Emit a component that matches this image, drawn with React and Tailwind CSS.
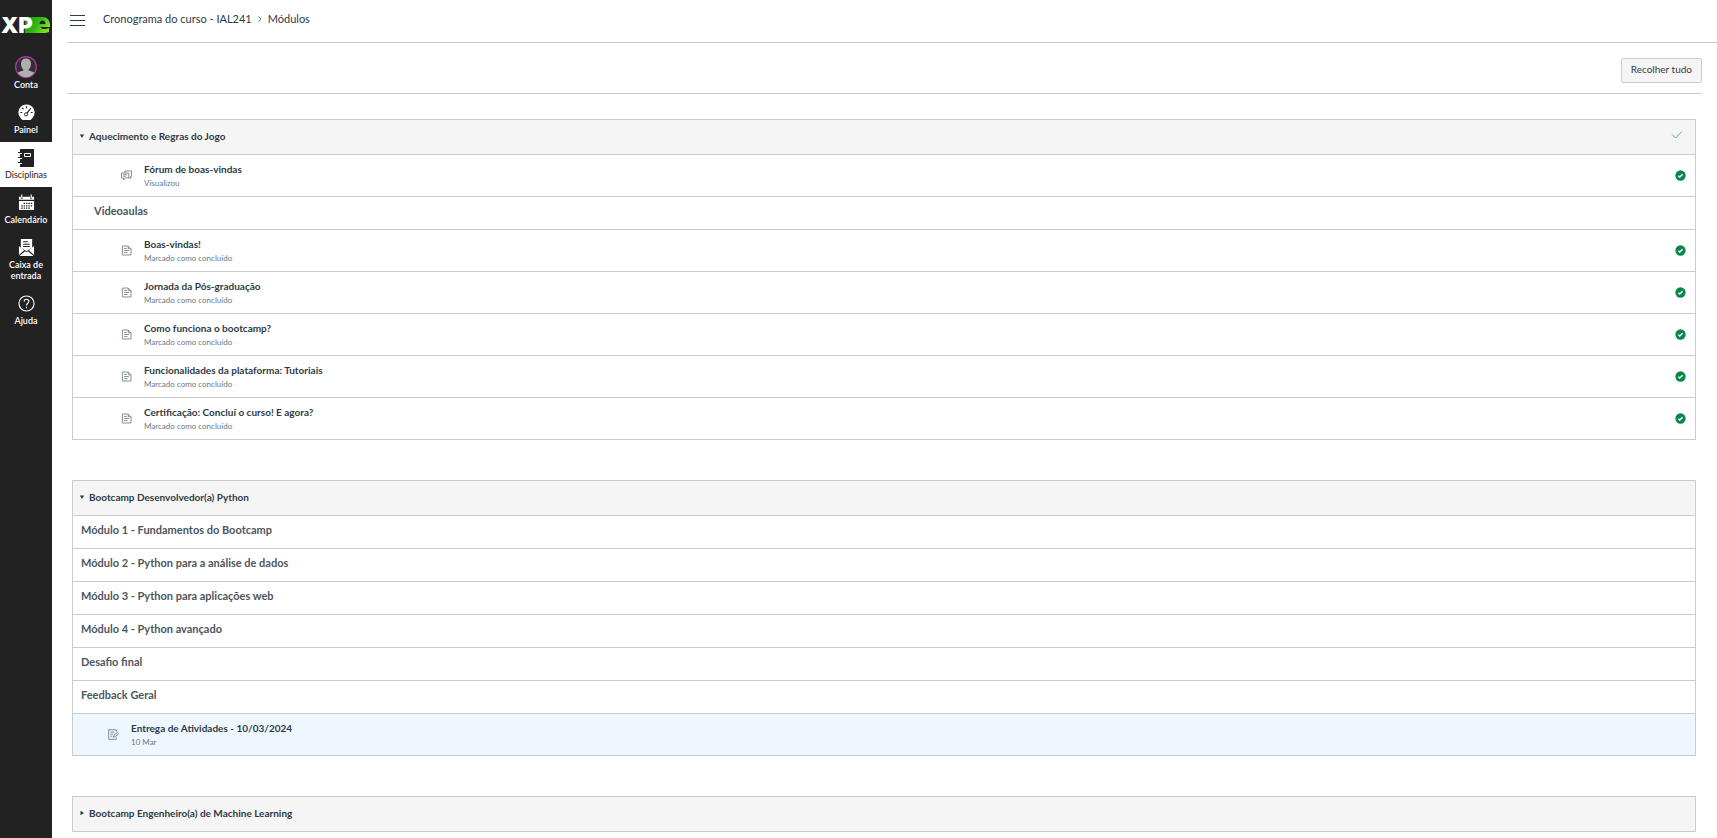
import { useState } from 'react';

const iconProps = {
    viewBox: '0 0 16 16',
    fill: 'none',
    stroke: 'currentColor',
    'aria-hidden': true,
};

const PageIcon = () => (
    <svg {...iconProps} className="size-[11px] shrink-0 text-[#6b7780]" strokeWidth="1.2">
        <path d="M2 1.500h8.500l4 4v9H2zM10.500 1.500v4h4M4.500 5h4M4.500 8h7M4.500 11h5" />
    </svg>
);

const DiscussionIcon = () => (
    <svg {...iconProps} className="size-[11px] shrink-0 text-[#6b7780]" strokeWidth="1.2">
        <path d="M5.500 4.500v-3h9.800v8H14v3l-2.500-2M.7 4.500h10.600v7H6.500L3.500 14.500v-3H.7zM3 7h6M3 9.200h4" />
    </svg>
);

const AssignmentIcon = () => (
    <svg {...iconProps} className="size-[11px] shrink-0 text-[#6b7780]" strokeWidth="1.2">
        <path d="M12 4V1H1v14h11v-2.500M3.500 4.500h6M3.500 7.500h4M3.500 10.500h3M8 12l.8-3 4.700-4 2 2-4.700 4z" />
    </svg>
);

const CompleteIcon = () => (
    <svg viewBox="0 0 16 16" className="size-[11px]" role="img" aria-label="Concluído">
        <circle cx="8" cy="8" r="7.5" fill="#0b874b" />
        <path d="M5 8.300l2 2 4-4" fill="none" stroke="#fff" strokeWidth="2" />
    </svg>
);

const Logo = () => (
    <svg viewBox="0 0 52 49" className="w-full h-[49px]" role="img" aria-label="XPe">
        <defs>
            <linearGradient id="logo-green" x1="0" x2="1" y1="0" y2=".4">
                <stop offset="0" stopColor="#009e12" />
                <stop offset=".6" stopColor="#35b818" />
                <stop offset="1" stopColor="#7ee01f" />
            </linearGradient>
        </defs>
        <path
            d="M25 17h17c5 0 8 3.500 8 8v2h-9.500c.5 1.500 2 2 4 2 1.800 0 3-.3 4.500-1v4c-2 .8-4 1-6 1H25z"
            fill="url(#logo-green)"
        />
        <path d="M39.500 24c.4-2.500 1.600-3.500 3.200-3.500s2.600 1 2.800 3.500z" fill="#222" />
        <text x="1" y="33" fill="#fff" fontFamily="Inter, sans-serif" fontWeight="900" fontSize="22">XP</text>
    </svg>
);

const AvatarIcon = () => (
    <svg viewBox="0 0 22 22" className="size-[22px]" aria-hidden="true">
        <circle cx="11" cy="11" r="10.4" fill="#303030" stroke="#bf32a4" strokeWidth="1.2" />
        <path d="M11 2.500c3.200 0 5 2 5 5.200 0 2.600-1 4.600-2.300 5.600v1.200c2 .6 4.500 1 5.500 2.300a9.800 9.800 0 0 1-16.400 0c1-1.300 3.500-1.700 5.500-2.300v-1.200C7 12.300 6 10.300 6 7.700c0-3.200 1.800-5.200 5-5.200z" fill="#b0b0b0" />
    </svg>
);

const DashboardIcon = () => (
    <svg viewBox="0 0 18 18" className="size-[17px]" aria-hidden="true">
        <path d="M9 .5a8.500 8.500 0 0 0-7.200 13c.8 1.500 2.200 3 3.200 3.500h8c1-.5 2.400-2 3.200-3.500A8.500 8.500 0 0 0 9 .5z" fill="#fff" />
        <path d="M9 2.500v2M4.500 4l1.300 1.500M2.500 9h2M13.500 9h2M9 10.500L13.500 4.500" stroke="#222" strokeWidth="1.3" />
        <circle cx="8.500" cy="11" r="1.700" fill="#fff" stroke="#222" />
    </svg>
);

const CoursesIcon = () => (
    <svg viewBox="0 0 18 18" className="size-[18px]" aria-hidden="true">
        <path d="M3 0h14v18H3v-3h2v-1H3v-4h2V9H3V5h2V4H3z" fill="#222" />
        <path d="M1 3.500h4M1 8.500h4M1 13.500h4" stroke="#222" strokeWidth="1.2" />
        <path d="M7.500 4.500h6v3h-6z" fill="none" stroke="#fff" />
    </svg>
);

const CalendarIcon = () => (
    <svg viewBox="0 0 18 18" className="size-[17px]" aria-hidden="true">
        <path d="M1 3h2v2h2V3h8v2h2V3h2v3H1zM1 7.500h16V17H1z" fill="#fff" />
        <path d="M4 .5v4M14 .5v4" stroke="#fff" strokeWidth="1.2" />
        <path
            d="M6 10h1.500m1 0h1.500m1 0h1.500m1 0h1.500M3.500 12.500H5m1 0h1.500m1 0h1.500m1 0h1.500m1 0h1.500M3.500 15H5m1 0h1.500m1 0h1.500m1 0h1.500"
            stroke="#222"
            strokeWidth="1.3"
        />
    </svg>
);

const InboxIcon = () => (
    <svg viewBox="0 0 18 18" className="size-[17px]" aria-hidden="true">
        <path d="M3 0h12v9l-6 4-6-4zM1 7.500l5.500 4.500L1 17zM17 7.500L11.500 12l5.500 5zM1.500 18l6-5L9 14l1.500-1 6 5z" fill="#fff" />
        <path d="M5.500 3h5M5.500 5.500h7M5.500 8h7" stroke="#222" strokeWidth="1.1" />
    </svg>
);

const HelpIcon = () => (
    <svg viewBox="0 0 18 18" className="size-[17px]" fill="none" stroke="#fff" strokeWidth="1.2" aria-hidden="true">
        <circle cx="9" cy="9" r="8" />
        <path d="M6.500 7c0-3.500 5-3.200 5-.3C11.500 8.700 9 8.800 9 11M9 12.500V14" />
    </svg>
);

const navItems = [
    { label: 'Conta', icon: AvatarIcon },
    { label: 'Painel', icon: DashboardIcon },
    { label: 'Disciplinas', icon: CoursesIcon, active: true },
    { label: 'Calendário', icon: CalendarIcon },
    { label: 'Caixa de entrada', icon: InboxIcon },
    { label: 'Ajuda', icon: HelpIcon },
];

const modules = [
    {
        title: 'Aquecimento e Regras do Jogo',
        open: true,
        completed: true,
        items: [
            { title: 'Fórum de boas-vindas', note: 'Visualizou', icon: DiscussionIcon, done: true },
            { heading: 'Videoaulas', indent: true },
            { title: 'Boas-vindas!', note: 'Marcado como concluído', icon: PageIcon, done: true },
            { title: 'Jornada da Pós-graduação', note: 'Marcado como concluído', icon: PageIcon, done: true },
            { title: 'Como funciona o bootcamp?', note: 'Marcado como concluído', icon: PageIcon, done: true },
            { title: 'Funcionalidades da plataforma: Tutoriais', note: 'Marcado como concluído', icon: PageIcon, done: true },
            { title: 'Certificação: Concluí o curso! E agora?', note: 'Marcado como concluído', icon: PageIcon, done: true },
        ],
    },
    {
        title: 'Bootcamp Desenvolvedor(a) Python',
        open: true,
        items: [
            { heading: 'Módulo 1 - Fundamentos do Bootcamp' },
            { heading: 'Módulo 2 - Python para a análise de dados' },
            { heading: 'Módulo 3 - Python para aplicações web' },
            { heading: 'Módulo 4 - Python avançado' },
            { heading: 'Desafio final' },
            { heading: 'Feedback Geral' },
            { title: 'Entrega de Atividades - 10/03/2024', note: '10 Mar', icon: AssignmentIcon, selected: true },
        ],
    },
    { title: 'Bootcamp Engenheiro(a) de Machine Learning', open: false, items: [] },
];

const Sidebar = () => (
    <nav className="w-[52px] shrink-0 bg-[#222222]">
        <a href="#" className="block">
            <Logo />
        </a>
        {navItems.map(({ label, icon: Icon, active }) => (
            <a
                key={label}
                href="#"
                className={`flex flex-col items-center gap-px pt-[7px] pb-[7px] text-center text-[9px] leading-[11px] ${
                    active ? 'bg-white text-[#222222]' : 'text-white font-semibold'
                }`}
            >
                <span className="flex min-h-[19px] items-start">
                    <Icon />
                </span>
                <span>{label}</span>
            </a>
        ))}
    </nav>
);

const ModuleItem = ({ item }) => {
    if (item.heading) {
        return (
            <li className={`h-[33px] border-t border-[#c7cdd1] pt-[6px] ${item.indent ? 'pl-[21px]' : 'pl-2'}`}>
                <h3 className="text-[11px] leading-4 font-bold text-[#4d565d]">{item.heading}</h3>
            </li>
        );
    }

    const Icon = item.icon;
    return (
        <li
            className={`flex h-[42px] items-center gap-3 border-t border-[#c7cdd1] pr-[9px] ${
                item.selected ? 'bg-[#eef7ff] pl-[35px]' : 'pl-12'
            }`}
        >
            <Icon />
            <div className="flex-1">
                <a href="#" className="block text-[10px] leading-[14px] font-bold text-[#2d3b45]">
                    {item.title}
                </a>
                <p className="text-[8px] leading-[14px] text-[#6b7780]">{item.note}</p>
            </div>
            {item.done && <CompleteIcon />}
        </li>
    );
};

const Module = ({ module, open, onToggle }) => (
    <section className="border border-[#c7cdd1]">
        <h2>
            <button
                type="button"
                aria-expanded={open}
                onClick={onToggle}
                className="flex h-[34px] w-full items-center gap-1 bg-[#f5f5f5] pb-0.5 pl-[6px] pr-3 text-left text-[10px] font-bold text-[#2d3b45]"
            >
                <svg viewBox="0 0 6 6" className="size-[6px]" fill="currentColor" aria-hidden="true">
                    {open ? <path d="M.8 1.500h4.400L3 5z" /> : <path d="M1.500.8v4.400L5 3z" />}
                </svg>
                <span className="flex-1">{module.title}</span>
                {module.completed && (
                    <svg viewBox="0 0 12 10" className="h-[10px] w-3" fill="none" stroke="#6fa08c" aria-hidden="true">
                        <path d="M1 3.500l3.500 3.500L11 .5" />
                    </svg>
                )}
            </button>
        </h2>
        {open && (
            <ul>
                {module.items.map((item) => (
                    <ModuleItem key={item.heading || item.title} item={item} />
                ))}
            </ul>
        )}
    </section>
);

const App = () => {
    const [openModules, setOpenModules] = useState(modules.map((m) => m.open));

    const toggle = (index) => {
        setOpenModules(openModules.map((open, i) => (i === index ? !open : open)));
    };

    return (
        <div className="flex min-h-screen bg-white font-['Lato',sans-serif] text-[#2d3b45]">
            <Sidebar />
            <div className="min-w-0 flex-1 pl-[15px]">
                {/* Breadcrumbs */}
                <header className="flex h-[43px] items-center gap-[18px] border-b border-[#c7cdd1] pb-0.5 pl-[3px]">
                    <button type="button" aria-label="Menu do curso">
                        <svg viewBox="0 0 15 11" className="h-[11px] w-[15px]" stroke="#2d3b45" aria-hidden="true">
                            <path d="M0 .5h15M0 5.500h15M0 10.500h15" />
                        </svg>
                    </button>
                    <nav className="flex items-center gap-[6px] pb-0.5 text-[11px]">
                        <a href="#">Cronograma do curso - IAL241</a>
                        <svg viewBox="0 0 4 6" className="h-[6px] w-1" fill="none" stroke="#6b7780" aria-hidden="true">
                            <path d="M.5.5L3 3 .5 5.500" />
                        </svg>
                        <span>Módulos</span>
                    </nav>
                </header>

                <main className="mr-[15px]">
                    <div className="flex h-[51px] items-center justify-end border-b border-[#c7cdd1] pt-1">
                        <button
                            type="button"
                            onClick={() => setOpenModules(modules.map(() => false))}
                            className="h-[25px] rounded-xs border border-[#c7cdd1] bg-[#f5f5f5] px-[9px] pb-0.5 text-[10px]"
                        >
                            Recolher tudo
                        </button>
                    </div>

                    {/* Modules */}
                    <div className="flex flex-col gap-10 pt-[25px] pl-[5px] pr-[6px]">
                        {modules.map((module, i) => (
                            <Module key={module.title} module={module} open={openModules[i]} onToggle={() => toggle(i)} />
                        ))}
                    </div>
                </main>
            </div>
        </div>
    );
};

export default App;
